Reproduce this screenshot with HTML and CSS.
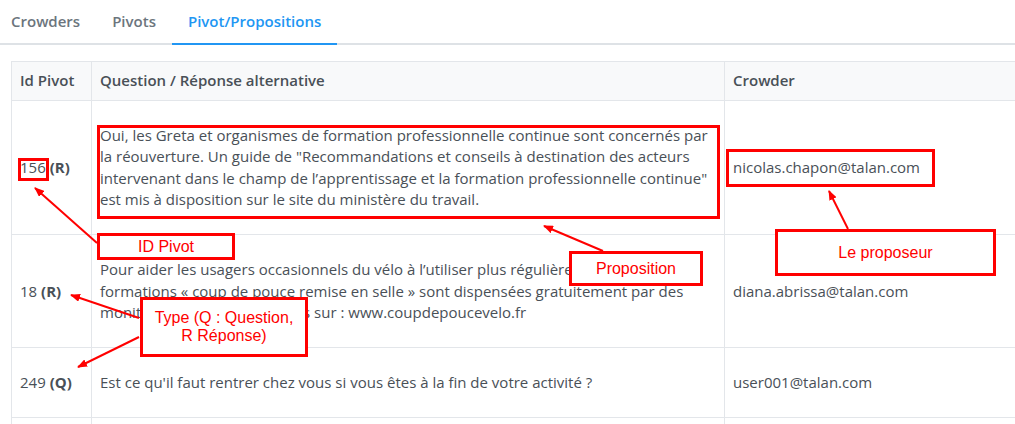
FILE: index.html
```html
<!DOCTYPE html>
<html lang="fr">
<head>
<meta charset="utf-8">
<title>Pivot/Propositions</title>
<link rel="stylesheet" href="styles.css">
</head>
<body>
<div class="page">
  <nav class="tabs">
    <a class="tab">Crowders</a>
    <a class="tab">Pivots</a>
    <a class="tab active">Pivot/Propositions</a>
  </nav>

  <table class="grid">
    <thead>
      <tr>
        <th class="c-id">Id Pivot</th>
        <th class="c-q">Question / Réponse alternative</th>
        <th class="c-cr">Crowder</th>
      </tr>
    </thead>
    <tbody>
      <tr>
        <td class="c-id">156 <b>(R)</b></td>
        <td class="c-q">Oui, les Greta et organismes de formation professionnelle continue sont concernés par<br>la réouverture. Un guide de "Recommandations et conseils à destination des acteurs<br>intervenant dans le champ de l’apprentissage et la formation professionnelle continue"<br>est mis à disposition sur le site du ministère du travail.</td>
        <td class="c-cr">nicolas.chapon@talan.com</td>
      </tr>
      <tr>
        <td class="c-id">18 <b>(R)</b></td>
        <td class="c-q">Pour aider les usagers occasionnels du vélo à l’utiliser plus régulièrement, des<br>formations « coup de pouce remise en selle » sont dispensées gratuitement par des<br>moniteurs agréés. Plus d'infos sur : www.coupdepoucevelo.fr</td>
        <td class="c-cr">diana.abrissa@talan.com</td>
      </tr>
      <tr>
        <td class="c-id">249 <b>(Q)</b></td>
        <td class="c-q">Est ce qu'il faut rentrer chez vous si vous êtes à la fin de votre activité ?</td>
        <td class="c-cr">user001@talan.com</td>
      </tr>
      <tr class="next">
        <td class="c-id"></td>
        <td class="c-q"></td>
        <td class="c-cr"></td>
      </tr>
    </tbody>
  </table>

  <div class="annotations">
    <div class="mark mark-id"></div>
    <div class="mark mark-prop"></div>
    <div class="mark mark-mail"></div>
    <div class="note note-id">ID Pivot</div>
    <div class="note note-prop">Proposition</div>
    <div class="note note-who">Le proposeur</div>
    <div class="note note-type">Type (Q : Question,<br>R Réponse)</div>
    <svg class="arrows" width="1015" height="424" viewBox="0 0 1015 424">
      <defs>
        <marker id="head" markerWidth="10" markerHeight="8" refX="9" refY="4" orient="auto" markerUnits="userSpaceOnUse">
          <path d="M0,0 L10,4 L0,8 Z" fill="#ff0000"/>
        </marker>
      </defs>
      <line x1="97" y1="243" x2="35" y2="188" stroke="#ff0000" stroke-width="2" marker-end="url(#head)"/>
      <line x1="603" y1="251" x2="544" y2="226" stroke="#ff0000" stroke-width="2" marker-end="url(#head)"/>
      <line x1="848" y1="229" x2="829" y2="191" stroke="#ff0000" stroke-width="2" marker-end="url(#head)"/>
      <line x1="139" y1="318" x2="71" y2="295" stroke="#ff0000" stroke-width="2" marker-end="url(#head)"/>
      <line x1="139" y1="337" x2="78" y2="367" stroke="#ff0000" stroke-width="2" marker-end="url(#head)"/>
    </svg>
  </div>
</div>
</body>
</html>
```

FILE: styles.css
```css
html, body {
  margin: 0;
  padding: 0;
  background: #ffffff;
  overflow: hidden;
}

body {
  font-family: "Open Sans", "Noto Sans", "Liberation Sans", sans-serif;
  color: #495057;
  width: 1015px;
  height: 424px;
}

.page {
  position: relative;
  width: 1015px;
  height: 424px;
  overflow: hidden;
}

.tabs {
  display: flex;
  margin-left: -5px;
  border-bottom: 2px solid #dee2e6;
}

.tab {
  display: block;
  padding: 10px 16px 11px;
  font-size: 15px;
  line-height: 22px;
  font-weight: 600;
  color: #6c757d;
  border-bottom: 2px solid transparent;
  margin-bottom: -2px;
}

.tab.active {
  color: #2196f3;
  border-bottom-color: #2196f3;
}

.grid {
  margin: 16px 0 0 11px;
  border-collapse: collapse;
  width: 1100px;
  font-size: 15px;
  line-height: 21.5px;
}

.grid th,
.grid td {
  border: 1px solid #e3e6ea;
  text-align: left;
  vertical-align: middle;
  padding: 24px 8px 23.5px;
}

.grid th {
  background: #f8f9fa;
  font-weight: 600;
  padding: 8px 8px;
}

.grid td b {
  font-weight: 700;
}

.grid .next td {
  height: 21.5px;
}

.c-id { width: 63px; }
.c-q { width: 616px; white-space: nowrap; }

.annotations {
  position: absolute;
  inset: 0;
  pointer-events: none;
}

.mark {
  position: absolute;
  border: 3px solid #ff0000;
  box-sizing: border-box;
}

.mark-id { left: 18px; top: 158px; width: 31px; height: 23px; }
.mark-prop { left: 97px; top: 125px; width: 623px; height: 94px; }
.mark-mail { left: 726px; top: 149px; width: 209px; height: 38px; }

.note {
  position: absolute;
  box-sizing: border-box;
  border: 3px solid #ff0000;
  background: #ffffff;
  color: #ff0000;
  font-family: "Liberation Sans", Arial, sans-serif;
  font-size: 16px;
  line-height: 18px;
  text-align: center;
  display: flex;
  align-items: center;
  justify-content: center;
}

.note-id { left: 97px; top: 233px; width: 138px; height: 27px; }
.note-prop { left: 569px; top: 251px; width: 134px; height: 35px; }
.note-who { left: 775px; top: 229px; width: 221px; height: 47px; }
.note-type { left: 140px; top: 297px; width: 168px; height: 60px; }

.arrows {
  position: absolute;
  left: 0;
  top: 0;
}
```
